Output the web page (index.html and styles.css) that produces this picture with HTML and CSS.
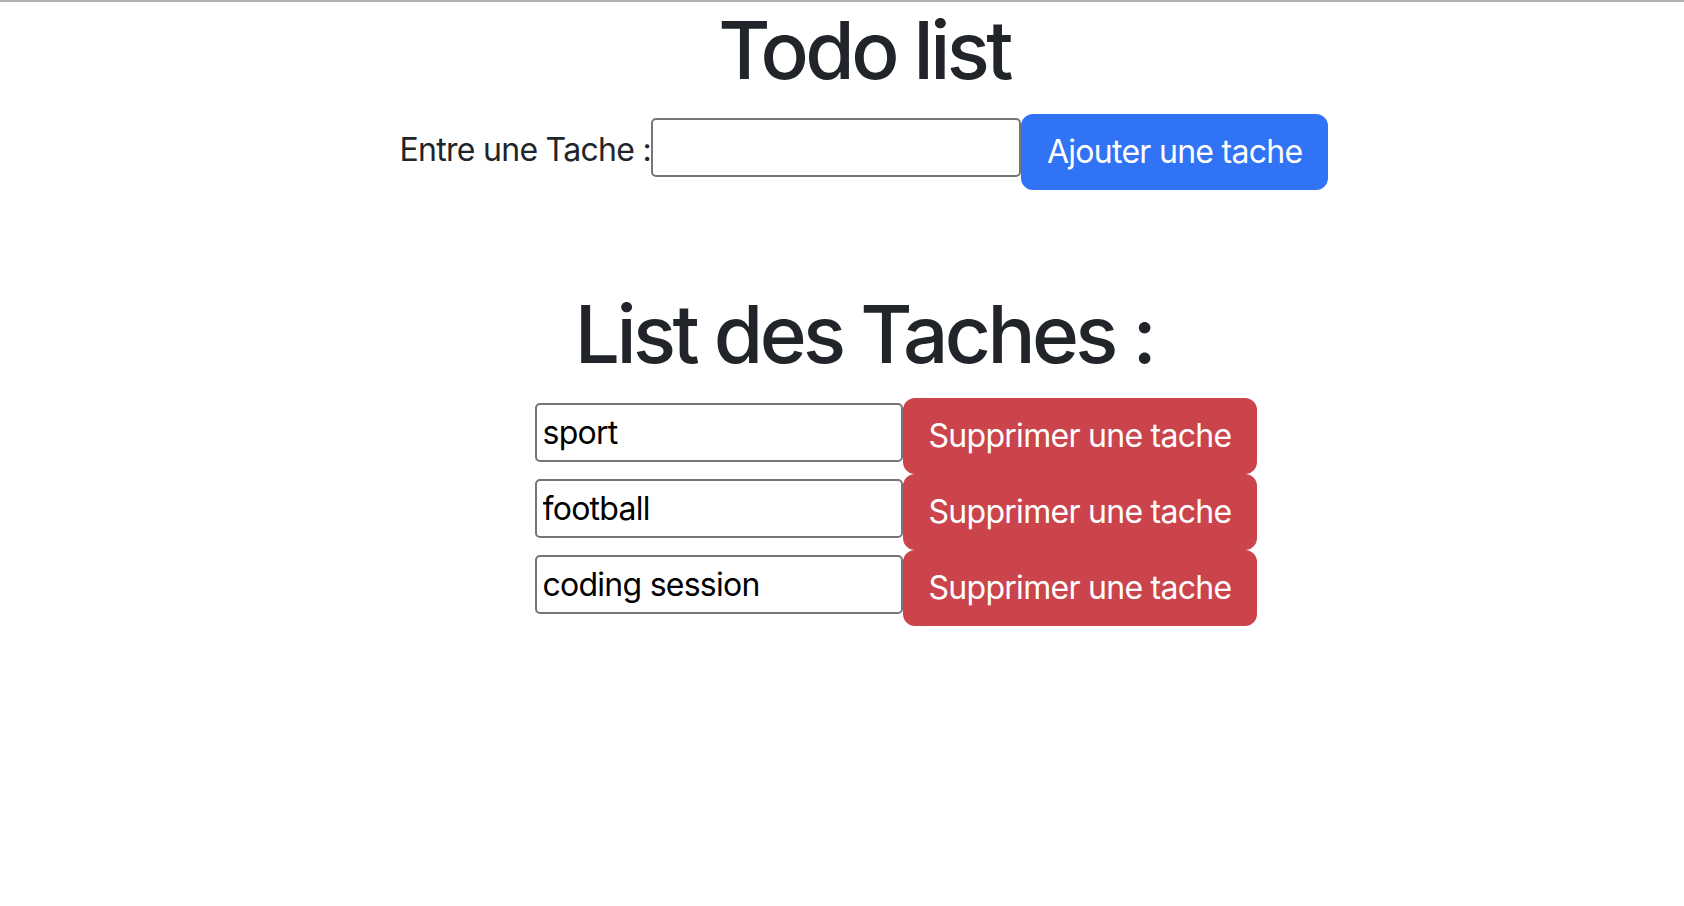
FILE: index.html
```html
<!DOCTYPE html>
<html lang="fr">
<head>
<meta charset="utf-8">
<title>Todo list</title>
<link rel="stylesheet" href="styles.css">
</head>
<body>
<main class="page">
  <h1 class="title">Todo list</h1>
  <form class="add-row">
    <label class="add-label" for="task">Entre une Tache :</label><input class="field field-add" id="task" type="text"><button class="btn btn-primary" type="button">Ajouter une tache</button>
  </form>
  <h1 class="title title-list">List des Taches :</h1>
  <ul class="task-list">
    <li class="task-row"><input class="field field-task" type="text" value="sport"><button class="btn btn-danger" type="button">Supprimer une tache</button></li>
    <li class="task-row"><input class="field field-task" type="text" value="football"><button class="btn btn-danger" type="button">Supprimer une tache</button></li>
    <li class="task-row"><input class="field field-task" type="text" value="coding session"><button class="btn btn-danger" type="button">Supprimer une tache</button></li>
  </ul>
</main>
</body>
</html>
```

FILE: styles.css
```css
* { box-sizing: border-box; }

html, body {
  margin: 0;
  padding: 0;
  background: #ffffff;
}

body {
  border-top: 2px solid #b0b0b5;
  font-family: Inter, "Noto Sans", "Liberation Sans", sans-serif;
  font-size: 32px;
  line-height: 48px;
  letter-spacing: -0.72px;
  color: #212529;
  overflow: hidden;
}

.page {
  padding-left: 44px;
  text-align: center;
}

.title {
  margin: 0 0 16px 0;
  font-size: 80px;
  line-height: 96px;
  font-weight: 500;
  letter-spacing: -3.6px;
  color: #212529;
}

.title-list {
  margin-top: 96px;
}

.add-row {
  margin: 0;
  display: flex;
  justify-content: center;
  align-items: flex-start;
}

.add-label {
  margin-top: 12px;
  line-height: 48px;
}

.field {
  margin: 0;
  font-family: inherit;
  font-size: 32px;
  line-height: 49px;
  letter-spacing: -0.75px;
  color: #000000;
  background: #ffffff;
  border: 2px solid #767676;
  border-radius: 5px;
  padding: 3px 6px;
  outline: none;
}

.field-add {
  width: 370px;
  margin-top: 4px;
}

.field-task {
  width: 368px;
  margin-top: 5px;
}

.btn {
  margin: 0;
  font-family: inherit;
  font-size: 32px;
  line-height: 48px;
  font-weight: 400;
  letter-spacing: -0.72px;
  color: #ffffff;
  padding: 12px 24px;
  border: 2px solid transparent;
  border-radius: 12px;
  cursor: pointer;
}

.btn-primary {
  background: #3173f5;
  border-color: #3173f5;
}

.btn-danger {
  background: #cb444c;
  border-color: #cb444c;
}

.task-list {
  list-style: none;
  margin: 0 0 32px 0;
  padding-left: 64px;
}

.task-row {
  display: flex;
  justify-content: center;
  align-items: flex-start;
}
```
